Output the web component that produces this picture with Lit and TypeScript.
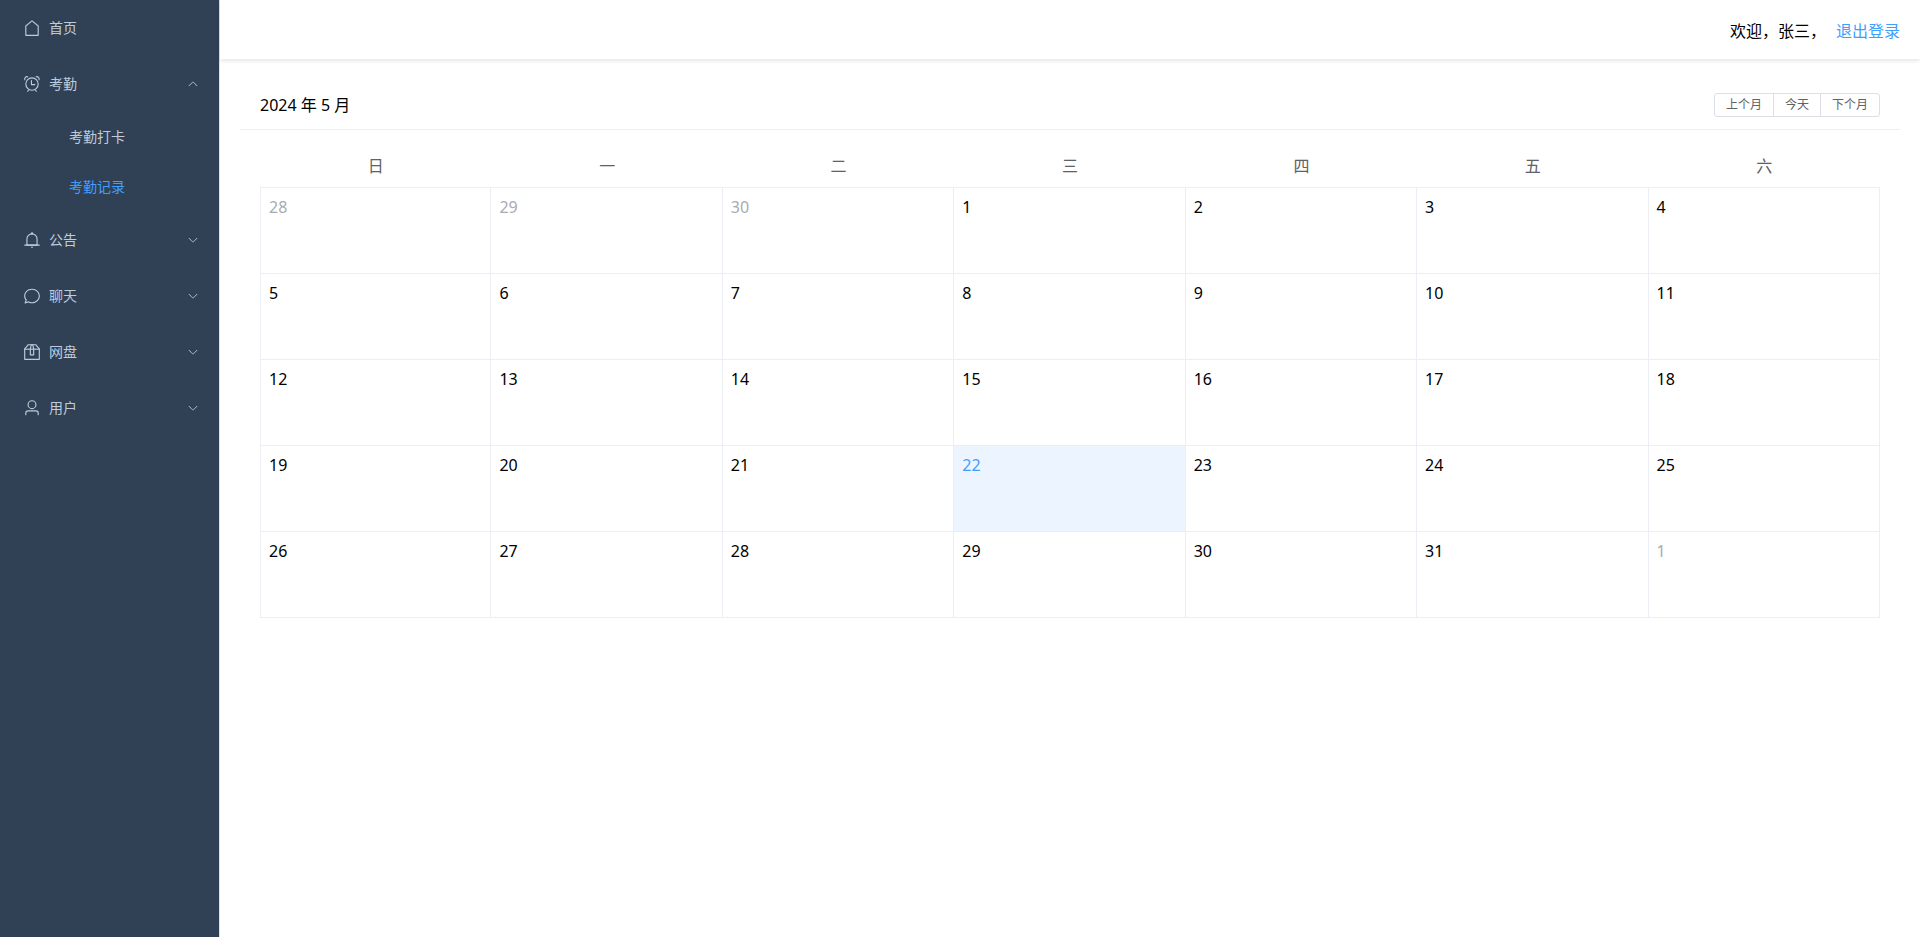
import { LitElement, html, css, svg } from "lit";
import { customElement, state } from "lit/decorators.js";
import { classMap } from "lit/directives/class-map.js";

const ICONS: Record<string, string[]> = {
  house: [
    "M192 413.952V896h640V413.952L512 147.328zM139.52 374.4l352-293.312a32 32 0 0 1 40.96 0l352 293.312A32 32 0 0 1 896 398.976V928a32 32 0 0 1-32 32H160a32 32 0 0 1-32-32V398.976a32 32 0 0 1 11.52-24.576",
  ],
  alarm: [
    "M512 832a320 320 0 1 0 0-640 320 320 0 0 0 0 640m0 64a384 384 0 1 1 0-768 384 384 0 0 1 0 768",
    "m292.288 824.576 55.424 32-48 83.136a32 32 0 1 1-55.424-32zm439.424 0-55.424 32 48 83.136a32 32 0 1 0 55.424-32zM512 512h160a32 32 0 1 1 0 64H480a32 32 0 0 1-32-32V320a32 32 0 0 1 64 0zM90.496 312.256A160 160 0 0 1 312.32 90.496l-46.848 46.848a96 96 0 0 0-128 128L90.56 312.256zm835.264 0A160 160 0 0 0 704 90.496l46.848 46.848a96 96 0 0 1 128 128z",
  ],
  bell: [
    "M512 64a64 64 0 0 1 64 64v64H448v-64a64 64 0 0 1 64-64",
    "M256 768h512V448a256 256 0 1 0-512 0zm256-640a320 320 0 0 1 320 320v384H192V448a320 320 0 0 1 320-320",
    "M96 768h832q32 0 32 32t-32 32H96q-32 0-32-32t32-32m352 128h128a64 64 0 0 1-128 0",
  ],
  chat: [
    "m174.72 855.68 135.296-45.12 23.68 11.84C388.096 849.536 448.576 864 512 864c211.84 0 384-166.784 384-352S723.84 160 512 160 128 326.784 128 512c0 69.12 24.96 139.264 70.848 199.232l22.08 28.8-46.272 115.584zm-45.248 82.56A32 32 0 0 1 89.6 896l58.368-145.92C94.72 680.32 64 596.864 64 512 64 299.904 256 96 512 96s448 203.904 448 416-192 416-448 416a461.06 461.06 0 0 1-206.912-48.384l-175.616 58.56z",
  ],
  box: [
    "M317.056 128 128 344.064V896h768V344.064L706.944 128zm-14.528-64h418.944a32 32 0 0 1 24.064 10.88l206.528 236.096A32 32 0 0 1 960 332.032V928a32 32 0 0 1-32 32H96a32 32 0 0 1-32-32V332.032a32 32 0 0 1 7.936-21.12L278.4 75.008A32 32 0 0 1 302.528 64",
    "M64 320h896v64H64z",
    "M448 327.872V640h128V327.872L526.08 128h-28.16zM448 64h128l64 256v352a32 32 0 0 1-32 32H416a32 32 0 0 1-32-32V320z",
  ],
  user: [
    "M512 512a192 192 0 1 0 0-384 192 192 0 0 0 0 384m0 64a256 256 0 1 1 0-512 256 256 0 0 1 0 512m320 320v-96a96 96 0 0 0-96-96H288a96 96 0 0 0-96 96v96a32 32 0 1 1-64 0v-96a160 160 0 0 1 160-160h448a160 160 0 0 1 160 160v96a32 32 0 1 1-64 0",
  ],
  arrow: [
    "M831.872 340.864 512 652.672 192.128 340.864a30.592 30.592 0 0 0-42.752 0 29.12 29.12 0 0 0 0 41.6L489.664 714.24a32 32 0 0 0 44.672 0l340.288-331.712a29.12 29.12 0 0 0 0-41.728 30.592 30.592 0 0 0-42.752 0z",
  ],
};

const icon = (name: string, cls: string) => html`
  <svg class=${cls} viewBox="0 0 1024 1024" fill="currentColor" aria-hidden="true">
    ${ICONS[name].map((d) => svg`<path d=${d}></path>`)}
  </svg>
`;

interface MenuEntry {
  id: string;
  label: string;
  icon: string;
  group: boolean;
  children?: string[];
}

const MENU: MenuEntry[] = [
  { id: "home", label: "首页", icon: "house", group: false },
  { id: "attendance", label: "考勤", icon: "alarm", group: true, children: ["考勤打卡", "考勤记录"] },
  { id: "notice", label: "公告", icon: "bell", group: true },
  { id: "chat", label: "聊天", icon: "chat", group: true },
  { id: "disk", label: "网盘", icon: "box", group: true },
  { id: "user", label: "用户", icon: "user", group: true },
];

@customElement("side-menu")
export class SideMenu extends LitElement {
  @state() private opened = new Set(["attendance"]);
  @state() private active = "考勤记录";

  static styles = css`
    :host {
      display: block;
      background: #304156;
      border-right: 1px solid #dcdfe6;
      color: #bfcbd9;
      font-size: 14px;
    }
    ul {
      list-style: none;
      margin: 0;
      padding: 0;
    }
    .item {
      box-sizing: border-box;
      display: flex;
      align-items: center;
      width: 100%;
      height: 56px;
      padding: 0 20px;
      border: 0;
      background: none;
      color: inherit;
      font: inherit;
      text-align: left;
      text-decoration: none;
      cursor: pointer;
    }
    .label {
      flex: 1;
      padding-bottom: 2px;
    }
    .icon {
      width: 18px;
      height: 18px;
      margin: 0 8px 0 3px;
    }
    .arrow {
      width: 12px;
      height: 12px;
    }
    .arrow.up {
      transform: rotate(180deg);
    }
    .sub {
      height: 50px;
      padding-left: 69px;
    }
    .sub.active {
      color: #409eff;
    }
  `;

  private toggle(id: string) {
    const next = new Set(this.opened);
    next.has(id) ? next.delete(id) : next.add(id);
    this.opened = next;
  }

  private renderEntry(m: MenuEntry) {
    if (!m.group) {
      return html`<li>
        <a class="item" href="#${m.id}">${icon(m.icon, "icon")}<span class="label">${m.label}</span></a>
      </li>`;
    }
    const open = this.opened.has(m.id);
    return html`<li>
      <button class="item" type="button" aria-expanded=${open} @click=${() => this.toggle(m.id)}>
        ${icon(m.icon, "icon")}<span class="label">${m.label}</span>${icon("arrow", open ? "arrow up" : "arrow")}
      </button>
      ${open && m.children
        ? html`<ul>
            ${m.children.map(
              (c) => html`<li>
                <a
                  class=${classMap({ item: true, sub: true, active: c === this.active })}
                  href="#${m.id}"
                  @click=${() => (this.active = c)}
                  ><span class="label">${c}</span></a
                >
              </li>`
            )}
          </ul>`
        : ""}
    </li>`;
  }

  render() {
    return html`<nav><ul>${MENU.map((m) => this.renderEntry(m))}</ul></nav>`;
  }
}

const WEEKDAYS = ["日", "一", "二", "三", "四", "五", "六"];
const TODAY = new Date(2024, 4, 22);

@customElement("month-calendar")
export class MonthCalendar extends LitElement {
  @state() private year = TODAY.getFullYear();
  @state() private month = TODAY.getMonth();

  static styles = css`
    :host {
      display: block;
    }
    .header {
      display: flex;
      justify-content: space-between;
      align-items: center;
      padding: 12px 20px;
      border-bottom: 1px solid #ebeef5;
    }
    .title {
      line-height: 24px;
    }
    .buttons {
      display: flex;
    }
    .buttons button {
      box-sizing: border-box;
      height: 24px;
      padding: 0 11px;
      border: 1px solid #dcdfe6;
      background: #fff;
      color: #606266;
      font: inherit;
      font-size: 12px;
      line-height: 12px;
      cursor: pointer;
    }
    .buttons button + button {
      margin-left: -1px;
    }
    .buttons button:first-child {
      border-radius: 3px 0 0 3px;
    }
    .buttons button:last-child {
      border-radius: 0 3px 3px 0;
    }
    .body {
      padding: 12px 20px 35px;
    }
    table {
      width: 100%;
      table-layout: fixed;
      border-collapse: separate;
      border-spacing: 0;
    }
    th {
      padding: 14px 0 10px;
      color: #606266;
      font-weight: 400;
      line-height: 21px;
    }
    td {
      height: 85px;
      padding: 0;
      border: solid #ebeef5;
      border-width: 0 1px 1px 0;
      vertical-align: top;
    }
    td:first-child {
      border-left-width: 1px;
    }
    tbody tr:first-child td {
      border-top-width: 1px;
    }
    .day {
      padding: 8px;
      line-height: 22px;
    }
    .other {
      color: #a8abb2;
    }
    .today {
      background: #ecf5ff;
      color: #409eff;
    }
  `;

  private shift(delta: number) {
    const d = new Date(this.year, this.month + delta, 1);
    this.year = d.getFullYear();
    this.month = d.getMonth();
  }

  private reset() {
    this.year = TODAY.getFullYear();
    this.month = TODAY.getMonth();
  }

  private get weeks(): Date[][] {
    const lead = new Date(this.year, this.month, 1).getDay();
    const days = new Date(this.year, this.month + 1, 0).getDate();
    const rows = Math.ceil((lead + days) / 7);
    return Array.from({ length: rows }, (_, r) =>
      Array.from({ length: 7 }, (_, c) => new Date(this.year, this.month, r * 7 + c + 1 - lead))
    );
  }

  render() {
    return html`
      <div class="header">
        <div class="title">${this.year} 年 ${this.month + 1} 月</div>
        <div class="buttons">
          <button type="button" @click=${() => this.shift(-1)}>上个月</button>
          <button type="button" @click=${() => this.reset()}>今天</button>
          <button type="button" @click=${() => this.shift(1)}>下个月</button>
        </div>
      </div>
      <div class="body">
        <table>
          <thead>
            <tr>
              ${WEEKDAYS.map((w) => html`<th scope="col">${w}</th>`)}
            </tr>
          </thead>
          <tbody>
            ${this.weeks.map(
              (week) => html`<tr>
                ${week.map(
                  (d) => html`<td
                    class=${classMap({
                      other: d.getMonth() !== this.month,
                      today: d.getTime() === TODAY.getTime(),
                    })}
                  >
                    <div class="day">${d.getDate()}</div>
                  </td>`
                )}
              </tr>`
            )}
          </tbody>
        </table>
      </div>
    `;
  }
}

@customElement("app-root")
export class AppRoot extends LitElement {
  static styles = css`
    :host {
      display: grid;
      grid-template-columns: 220px 1fr;
      min-height: 100vh;
      background: #fff;
      color: #000;
      font-family: "Noto Sans", "Noto Sans CJK SC", sans-serif;
      font-size: 16px;
    }
    .main {
      min-width: 0;
    }
    .top {
      display: flex;
      justify-content: flex-end;
      align-items: center;
      gap: 10px;
      height: 59px;
      padding: 0 20px;
      box-shadow: 0 2px 4px rgba(0, 0, 0, 0.1);
    }
    .logout {
      color: #409eff;
      text-decoration: none;
    }
    .content {
      padding: 22px 20px 20px;
    }
  `;

  render() {
    return html`
      <side-menu></side-menu>
      <div class="main">
        <header class="top">
          <span>欢迎，张三，</span>
          <a class="logout" href="#logout">退出登录</a>
        </header>
        <main class="content"><month-calendar></month-calendar></main>
      </div>
    `;
  }
}
